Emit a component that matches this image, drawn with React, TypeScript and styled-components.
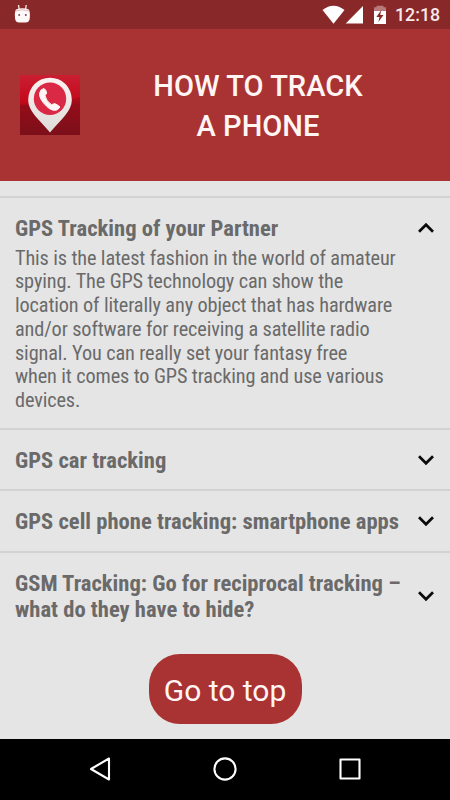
import React from "react";
import styled, { createGlobalStyle } from "styled-components";

const GlobalStyle = createGlobalStyle`
  * { box-sizing: border-box; }
  html, body { margin: 0; padding: 0; }
  body { font-family: Roboto, "Noto Sans", sans-serif; background: #e5e5e5; }
`;

const Screen = styled.div`
  width: 450px;
  height: 800px;
  overflow: hidden;
  display: flex;
  flex-direction: column;
  background: #e5e5e5;
`;

const StatusBar = styled.div`
  height: 29px;
  flex: none;
  background: #882828;
  display: flex;
  align-items: center;
  padding: 0 10px 0 12px;
`;

const StatusIcons = styled.div`
  margin-left: auto;
  display: flex;
  align-items: center;
`;

const PowerGroup = styled.div`
  display: flex;
  margin-left: 9px;
`;

const Clock = styled.span`
  width: 45px;
  margin-left: 8px;
  color: #f7eaea;
  font-size: 17.8px;
  font-weight: 500;
  line-height: 30px;
  white-space: nowrap;
`;

const Header = styled.header`
  height: 152px;
  flex: none;
  background: #a93233;
  display: flex;
  align-items: center;
  padding-left: 20px;
`;

const Title = styled.h1`
  margin: 0 0 0 58px;
  padding-top: 1px;
  width: 240px;
  text-align: center;
  color: #fff5f3;
  font-size: 29.1px;
  font-weight: 500;
  line-height: 40px;
  white-space: nowrap;
`;

const List = styled.main`
  flex: 1;
  padding-top: 15px;
`;

const Entry = styled.section<{ $height: number }>`
  height: ${(p) => p.$height}px;
  border-top: 2px solid #d2d2d2;
  padding: 16px 15px 0;
`;

const EntryHead = styled.div`
  display: flex;
  align-items: center;
  justify-content: space-between;
`;

const Heading = styled.h2`
  margin: 0;
  padding-top: 2px;
  color: #6a6a6a;
  font-family: "Roboto Condensed", Roboto, sans-serif;
  font-stretch: 75%;
  font-size: 22.6px;
  font-weight: 700;
  line-height: 26px;
  white-space: nowrap;
`;

const Body = styled.p`
  margin: 4.5px 0 0;
  color: #6a6a6a;
  font-family: "Roboto Condensed", Roboto, sans-serif;
  font-stretch: 75%;
  font-size: 20.3px;
  letter-spacing: -0.13px;
  line-height: 23.75px;
  white-space: nowrap;
`;

const TopButton = styled.button`
  display: block;
  margin: 3px auto 0;
  width: 153px;
  height: 70px;
  padding: 3px 0 0;
  border: 0;
  border-radius: 31px;
  background: #a93233;
  color: #fff5f3;
  font-family: Roboto, sans-serif;
  font-size: 30px;
  white-space: nowrap;
`;

const NavBar = styled.nav`
  height: 61px;
  flex: none;
  background: #000;
  display: flex;
  align-items: center;
  justify-content: space-between;
  padding: 0 85px 1px;
`;

const Chevron = ({ up }: { up?: boolean }) => (
  <svg width="18" height="12" viewBox="0 0 18 12" fill="none" stroke="#0a0a0a" strokeWidth="2.7">
    <path d={up ? "M2 9.7L9 2.7L16 9.7" : "M2 2.3L9 9.3L16 2.3"} />
  </svg>
);

const Robot = () => (
  <svg width="20" height="20" viewBox="0 0 20 20">
    <path d="M6.5 0L7.2 5M14.2 0L13.5 5" stroke="#f5dede" strokeWidth="1.4" />
    <path d="M4 4.5Q10.4 2 16.8 4.5Q18.3 7 17.8 13Q17.4 17.5 13.5 17.5H7.2Q3.3 17.5 3 13Q2.4 7 4 4.5Z" fill="#fff8f8" />
    <path d="M3.5 6Q10.4 3.5 17.3 6" stroke="#dba8aa" strokeWidth="0.8" fill="none" />
    <circle cx="7.2" cy="10" r="0.95" fill="#74434b" />
    <circle cx="13.8" cy="10" r="0.95" fill="#74434b" />
  </svg>
);

const Wifi = () => (
  <svg width="23" height="20" viewBox="0 0 23 20">
    <path d="M11.5 18.7L0.5 5Q11.5 -3.5 22.5 5Z" fill="#fff" />
  </svg>
);

const Signal = () => (
  <svg width="19" height="20" viewBox="0 0 19 20">
    <path d="M18 1V18.5H0.7Z" fill="#fff" />
  </svg>
);

const Battery = () => (
  <svg width="14" height="20" viewBox="0 0 14 20">
    <path d="M3.5 0.8H10.5V2.3H13V6H1V2.3H3.5Z" fill="#b77a7b" />
    <path d="M1 6H13V19H1Z" fill="#fff" />
    <path d="M8.3 5L3.4 12H6.5L5.4 17L10.5 10H7.2Z" fill="#882828" />
  </svg>
);

const Logo = () => (
  <svg width="60" height="60" viewBox="0 0 60 60">
    <defs>
      <linearGradient id="tile" x1="0" y1="0" x2="0" y2="1">
        <stop offset="0" stopColor="#c91f31" />
        <stop offset="0.45" stopColor="#c5081b" />
        <stop offset="0.5" stopColor="#a70b1a" />
        <stop offset="1" stopColor="#7e111b" />
      </linearGradient>
      <linearGradient id="pin" x1="0" y1="0" x2="0" y2="1">
        <stop offset="0" stopColor="#fbf3f2" />
        <stop offset="1" stopColor="#dedbd9" />
      </linearGradient>
    </defs>
    <path d="M0 0H60V60H0Z" fill="url(#tile)" />
    <path d="M0 30Q32 32 60 22V60H0Z" fill="#790e19" opacity="0.4" />
    <path d="M30 57.5Q28 55 17 43C11 36 8.2 31 8.2 24.5A21.8 21.8 0 0 1 51.8 24.5C51.8 31 49 36 43 43Q32 55 30 57.5Z" fill="url(#pin)" />
    <circle cx="30" cy="23.8" r="16.2" fill="#d92944" />
    <path d="M21 15L24 13.4Q26 14.5 26.7 18L25 20.7Q26 26 31.5 29.7L34.7 28.6Q38 30 40 32L37.5 34.7Q32.5 36.8 26.8 31.4Q18.5 23.5 19.7 18Z" fill="#fff5f4" stroke="#fff5f4" strokeWidth="1" strokeLinejoin="round" />
  </svg>
);

const NavIcon = styled.svg.attrs({ width: 30, height: 30, viewBox: "0 0 30 30" })`
  fill: none;
  stroke: #fff;
  stroke-width: 2.1px;
  stroke-linejoin: round;
`;

export default function App() {
  return (
    <>
      <GlobalStyle />
      <Screen>
        <StatusBar>
          <Robot />
          <StatusIcons>
            <Wifi />
            <Signal />
            <PowerGroup>
              <Battery />
            </PowerGroup>
            <Clock>12:18</Clock>
          </StatusIcons>
        </StatusBar>
        <Header>
          <Logo />
          <Title>HOW TO TRACK<br />A PHONE</Title>
        </Header>
        <List>
          <Entry $height={232}>
            <EntryHead>
              <Heading>GPS Tracking of your Partner</Heading>
              <Chevron up />
            </EntryHead>
            <Body>
              This is the latest fashion in the world of amateur<br />
              spying. The GPS technology can show the<br />
              location of literally any object that has hardware<br />
              and/or software for receiving a satellite radio<br />
              signal. You can really set your fantasy free<br />
              when it comes to GPS tracking and use various<br />
              devices.
            </Body>
          </Entry>
          <Entry $height={61}>
            <EntryHead><Heading>GPS car tracking</Heading><Chevron /></EntryHead>
          </Entry>
          <Entry $height={62}>
            <EntryHead><Heading>GPS cell phone tracking: smartphone apps</Heading><Chevron /></EntryHead>
          </Entry>
          <Entry $height={100}>
            <EntryHead>
              <Heading>GSM Tracking: Go for reciprocal tracking –<br />what do they have to hide?</Heading>
              <Chevron />
            </EntryHead>
          </Entry>
          <TopButton>Go to top</TopButton>
        </List>
        <NavBar>
          <NavIcon><path d="M24 4.5V25.5L6 15Z" /></NavIcon>
          <NavIcon><circle cx="15" cy="15" r="10.6" /></NavIcon>
          <NavIcon><rect x="5.5" y="5.5" width="19" height="19" /></NavIcon>
        </NavBar>
      </Screen>
    </>
  );
}
